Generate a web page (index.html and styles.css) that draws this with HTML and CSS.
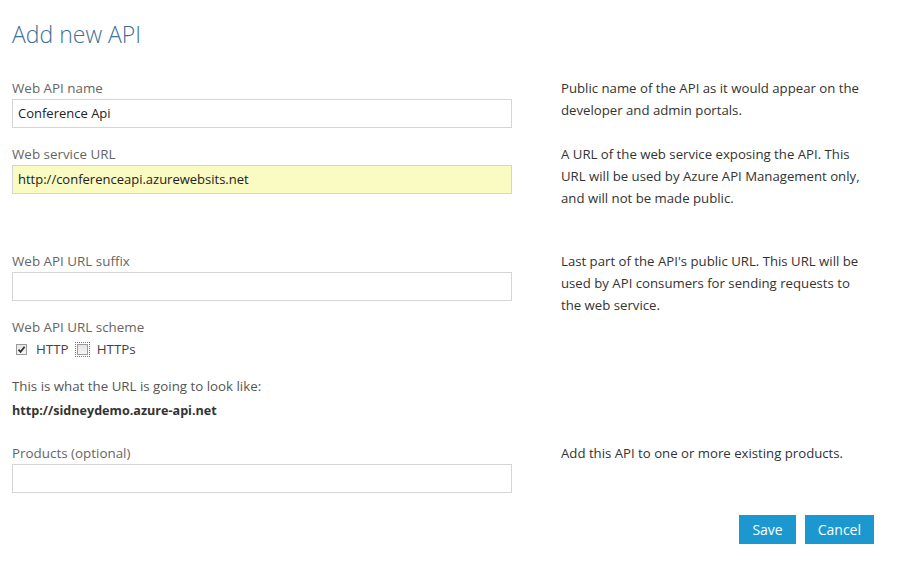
FILE: index.html
```html
<!DOCTYPE html>
<html>
<head>
<meta charset="utf-8">
<link rel="stylesheet" href="styles.css">
</head>
<body>
<div class="page">
  <h1 class="title">Add new API</h1>

  <div class="row row-name">
    <div class="field">
      <label class="label">Web API name</label>
      <div class="input">Conference Api</div>
    </div>
    <p class="help">Public name of the API as it would appear on the developer and admin portals.</p>
  </div>

  <div class="row row-url">
    <div class="field">
      <label class="label">Web service URL</label>
      <div class="input input-yellow">http://conferenceapi.azurewebsits.net</div>
    </div>
    <p class="help">A URL of the web service exposing the API. This URL will be used by Azure API Management only, and will not be made public.</p>
  </div>

  <div class="row row-suffix">
    <div class="field">
      <label class="label">Web API URL suffix</label>
      <div class="input"></div>
    </div>
    <p class="help">Last part of the API's public URL. This URL will be used by API consumers for sending requests to the web service.</p>
  </div>

  <div class="row row-scheme">
    <div class="field">
      <label class="label">Web API URL scheme</label>
      <div class="checks">
        <span class="cb cb-checked"><svg width="9" height="9" viewBox="0 0 9 9"><path d="M1.5 4.6 L3.6 6.8 L7.6 1.8" fill="none" stroke="#333" stroke-width="1.8"/></svg></span>
        <span class="cb-label">HTTP</span>
        <span class="cb cb-focus"></span>
        <span class="cb-label">HTTPs</span>
      </div>
      <div class="preview-label">This is what the URL is going to look like:</div>
      <div class="preview-url">http://sidneydemo.azure-api.net</div>
    </div>
  </div>

  <div class="row row-products">
    <div class="field">
      <label class="label">Products (optional)</label>
      <div class="input"></div>
    </div>
    <p class="help">Add this API to one or more existing products.</p>
  </div>

  <div class="actions">
    <button class="btn">Save</button>
    <button class="btn">Cancel</button>
  </div>
</div>
</body>
</html>
```

FILE: styles.css
```css
html, body {
  margin: 0;
  padding: 0;
  background: #fff;
}
body {
  font-family: "Open Sans", "Noto Sans", sans-serif;
  font-size: 13px;
  color: #333;
}
.page {
  padding: 0 12px;
  width: 883px;
}
.title {
  margin: 0;
  padding-top: 17px;
  font-size: 23px;
  font-weight: 300;
  color: #3f6f96;
  line-height: 34px;
  height: 34px;
}
.row {
  display: grid;
  grid-template-columns: 500px 306px;
  column-gap: 49px;
  align-items: start;
}
.row-name { margin-top: 28px; }
.row-url { margin-top: 17px; }
.row-suffix { margin-top: 43px; }
.row-scheme { margin-top: 2px; }
.row-products { margin-top: 24px; }
.field { display: flex; flex-direction: column; }
.label {
  color: #666;
  font-size: 13.4px;
  line-height: 18px;
  height: 18px;
  margin-bottom: 2px;
}
.input {
  box-sizing: border-box;
  height: 29px;
  border: 1px solid #d5d5d5;
  background: #fff;
  padding: 0 5px;
  line-height: 27px;
  color: #222;
  font-size: 13px;
}
.input-yellow { background: #fafac3; }
.help {
  margin: -2px 0 0;
  font-size: 13.2px;
  line-height: 22px;
  color: #333;
}
.checks {
  display: flex;
  align-items: center;
  height: 22px;
  padding-left: 4px;
}
.cb {
  box-sizing: border-box;
  width: 11px;
  height: 11px;
  border: 1px solid #9a9a9a;
  background: linear-gradient(#e6e6e6, #f6f6f6);
  display: inline-flex;
  align-items: center;
  justify-content: center;
  margin-right: 9px;
}
.cb-focus {
  outline: 1px dotted #777;
  outline-offset: 1px;
  margin-left: 8px;
}
.cb-label { color: #444; font-size: 13.4px; }
.preview-label {
  margin-top: 17px;
  font-size: 13.3px;
  line-height: 18px;
  color: #555;
}
.preview-url {
  margin-top: 7px;
  font-size: 12.6px;
  font-weight: 700;
  line-height: 18px;
  color: #333;
}
.actions {
  display: flex;
  justify-content: flex-end;
  gap: 9px;
  margin-top: 22px;
  padding-right: 21px;
}
.btn {
  font-family: inherit;
  font-size: 14px;
  color: #fff;
  background: #1b98cf;
  border: none;
  height: 29px;
  padding: 0 13px;
  cursor: pointer;
}
```
